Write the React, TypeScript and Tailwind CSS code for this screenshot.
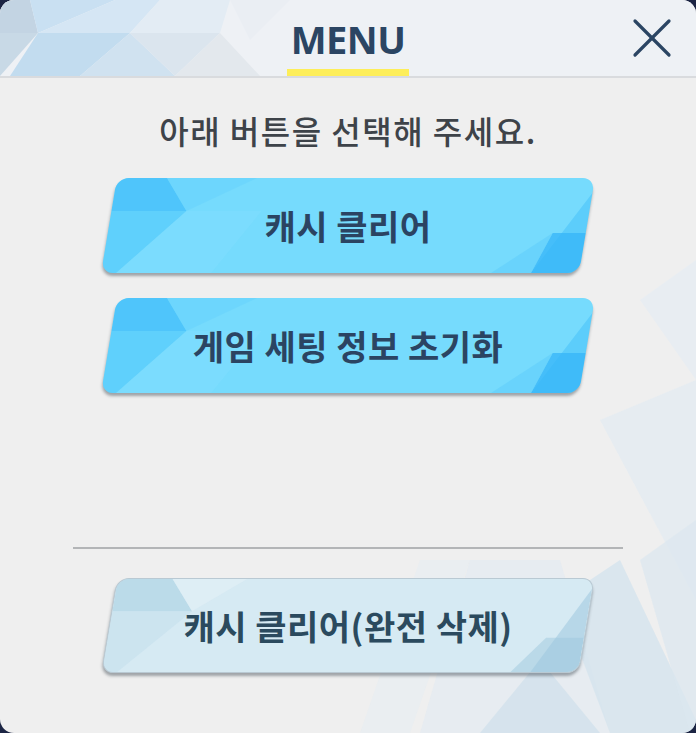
import { X } from "lucide-react";

const kr = "font-['Noto_Sans_CJK_KR','Noto_Sans',sans-serif]";

function SkewButton({ label, variant }: { label: string; variant: "blue" | "pale" }) {
  const blue = variant === "blue";
  return (
    <button className="relative mx-auto flex h-[95px] w-[478px] items-center justify-center">
      {/* skewed plate */}
      <span
        className={`absolute inset-0 -skew-x-[9.5deg] overflow-hidden rounded-[12px] ${
          blue
            ? "bg-[#76dbfd] shadow-[0_3px_3px_rgba(60,70,80,0.45)]"
            : "border border-[#b9c9d3] bg-[#d6eaf3] shadow-[0_3px_3px_rgba(60,70,80,0.45)]"
        }`}
      >
        <svg className="absolute inset-0 h-full w-full" viewBox="0 0 478 95" preserveAspectRatio="none">
          {blue ? (
            <>
              <polygon points="0,0 50,0 75,33 0,33" fill="#3fbcf9" opacity="0.7" />
              <polygon points="0,33 75,33 15,95 0,95" fill="#4cc6fb" opacity="0.55" />
              <polygon points="75,33 150,33 110,95 15,95" fill="#86e0fe" opacity="0.35" />
              <polygon points="50,0 140,0 75,33" fill="#63d1fc" opacity="0.45" />
              <polygon points="478,0 478,95 430,95 478,15" fill="#3fbcf9" opacity="0.45" />
              <polygon points="478,55 478,95 430,95 445,55" fill="#36b4f8" opacity="0.75" />
              <polygon points="390,95 445,55 430,95" fill="#5ccbfb" opacity="0.5" />
            </>
          ) : (
            <>
              <polygon points="0,0 55,0 80,33 0,33" fill="#a9d0e2" opacity="0.6" />
              <polygon points="0,33 80,33 15,95 0,95" fill="#c4e0ec" opacity="0.6" />
              <polygon points="55,0 130,0 80,33" fill="#e6f2f7" opacity="0.5" />
              <polygon points="478,10 478,95 430,95" fill="#a9cfe2" opacity="0.7" />
              <polygon points="478,60 478,95 410,95 440,60" fill="#9ec8de" opacity="0.5" />
            </>
          )}
        </svg>
      </span>
      <span
        className={`relative text-[34px] font-bold tracking-[0.5px] ${kr} ${
          blue ? "text-[#2b4462]" : "text-[#2b4a5e]"
        }`}
      >
        {label}
      </span>
    </button>
  );
}

export default function App() {
  return (
    <div className="h-[733px] w-[696px] bg-[#1c2544]">
      <div className="relative flex h-full flex-col overflow-hidden rounded-[14px] bg-[#efefef]">
        {/* Background decoration */}
        <svg className="absolute inset-0 h-full w-full" viewBox="0 0 696 733" preserveAspectRatio="none">
          <polygon points="600,420 696,380 696,600" fill="#e3ebf2" opacity="0.7" />
          <polygon points="640,300 696,260 696,380" fill="#e6edf3" opacity="0.7" />
          <polygon points="420,560 470,560 410,733 360,733" fill="#e6edf2" opacity="0.6" />
          <polygon points="470,560 560,560 610,733 420,733" fill="#e1eaf1" opacity="0.6" />
          <polygon points="560,600 620,560 696,720 696,733 610,733" fill="#d4e3ee" opacity="0.8" />
          <polygon points="540,660 600,733 480,733" fill="#cfdfeb" opacity="0.7" />
          <polygon points="640,560 696,520 696,733 690,733" fill="#dbe7f0" opacity="0.7" />
        </svg>

        {/* Header */}
        <header className="relative flex h-[78px] shrink-0 items-center justify-center border-b-2 border-[#d9dbde] bg-[#eef1f5]">
          <svg className="absolute inset-0 h-full w-full" viewBox="0 0 696 76" preserveAspectRatio="none">
            <polygon points="0,0 30,0 38,33 0,33" fill="#c3d4e3" />
            <polygon points="30,0 115,0 38,33" fill="#c9e0f2" />
            <polygon points="38,33 115,0 160,0 130,33" fill="#d5e6f4" />
            <polygon points="0,33 38,33 0,76" fill="#c8d9e6" />
            <polygon points="38,33 130,33 80,76 10,76" fill="#c2dcef" />
            <polygon points="130,33 80,76 175,76" fill="#d0e2f0" />
            <polygon points="130,33 220,33 175,76" fill="#dbe5ee" />
            <polygon points="160,0 230,0 220,33 130,33" fill="#e3ecf4" />
            <polygon points="175,76 220,33 260,76" fill="#e3e8ed" />
            <polygon points="230,0 290,0 250,40" fill="#e8eef3" opacity="0.8" />
          </svg>
          <div className="relative flex h-full flex-col items-center justify-center">
            <span className="mt-[2px] font-['Noto_Sans',sans-serif] text-[38px] font-bold leading-none tracking-[-0.5px] text-[#2b4563]">
              MENU
            </span>
            <span className="absolute bottom-[0px] left-1/2 h-[7px] w-[122px] -translate-x-1/2 bg-[#fdee5a]" />
          </div>
          <button className="absolute right-[10px] top-[4px] text-[#2b4563]">
            <X className="h-[68px] w-[68px]" strokeWidth={1.15} />
          </button>
        </header>

        {/* Body */}
        <div className="relative flex flex-col">
          <p className={`mt-[31px] text-center text-[32px] font-medium leading-[42px] tracking-[1.5px] text-[#3e4349] ${kr}`}>
            아래 버튼을 선택해 주세요.
          </p>
          <div className="mt-[27px] flex flex-col gap-[25px]">
            <SkewButton label="캐시 클리어" variant="blue" />
            <SkewButton label="게임 세팅 정보 초기화" variant="blue" />
          </div>
          <div className="mx-auto mt-[154px] h-[2px] w-[550px] bg-[#b3b5b7]" />
          <div className="mt-[29px]">
            <SkewButton label="캐시 클리어(완전 삭제)" variant="pale" />
          </div>
        </div>
      </div>
    </div>
  );
}
